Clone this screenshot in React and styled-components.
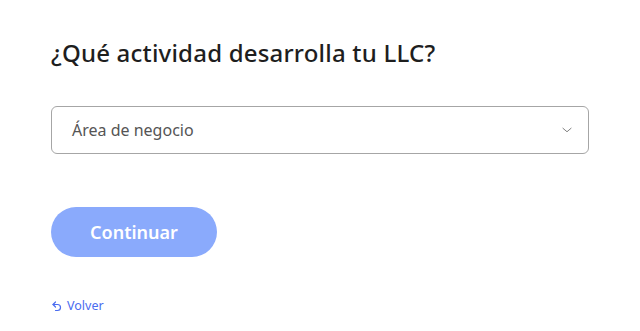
import React from 'react';
import styled, { createGlobalStyle } from 'styled-components';

const GlobalStyle = createGlobalStyle`
  body {
    margin: 0;
    background: #fff;
    font-family: 'Noto Sans', 'Lato', sans-serif;
  }
`;

const Page = styled.div`
  padding: 38px 52px 0 51px;
  width: 538px;
`;

const Title = styled.h1`
  margin: 0 0 38px;
  font-size: 24px;
  font-weight: 500;
  letter-spacing: 0.2px;
  color: #1e1e1e;
  line-height: 30px;
`;

const SelectBox = styled.div`
  height: 46px;
  border: 1px solid #a6a6a6;
  border-radius: 6px;
  display: flex;
  align-items: center;
  justify-content: space-between;
  padding: 0 14px 0 20px;
  color: #555;
  font-size: 16px;
  cursor: pointer;
`;

const Chevron = styled.svg`
  width: 14px;
  height: 14px;
  color: #777;
`;

const Button = styled.button`
  margin-top: 53px;
  width: 166px;
  height: 50px;
  border: none;
  border-radius: 25px;
  background: #8aaafc;
  color: #fff;
  font-family: inherit;
  font-size: 18px;
  font-weight: 600;
  cursor: pointer;
`;

const Back = styled.a`
  margin-top: 41px;
  display: flex;
  align-items: center;
  gap: 4px;
  color: #4a6cf0;
  font-size: 12.5px;
  line-height: 16px;
  text-decoration: none;
  cursor: pointer;
`;

export default function App() {
  return (
    <>
      <GlobalStyle />
      <Page>
        <Title>¿Qué actividad desarrolla tu LLC?</Title>
        <SelectBox>
          <span>Área de negocio</span>
          <Chevron viewBox="0 0 24 24" fill="none" stroke="currentColor" strokeWidth="1.6" strokeLinecap="round" strokeLinejoin="round">
            <path d="M5 9l7 6 7-6" />
          </Chevron>
        </SelectBox>
        <Button>Continuar</Button>
        <Back>
          <svg width="12" height="12" viewBox="0 0 24 24" fill="none" stroke="currentColor" strokeWidth="2.4" strokeLinecap="round" strokeLinejoin="round">
            <path d="M9 4L4 9l5 5" />
            <path d="M4 9h9a6 6 0 0 1 0 12H9" />
          </svg>
          Volver
        </Back>
      </Page>
    </>
  );
}
